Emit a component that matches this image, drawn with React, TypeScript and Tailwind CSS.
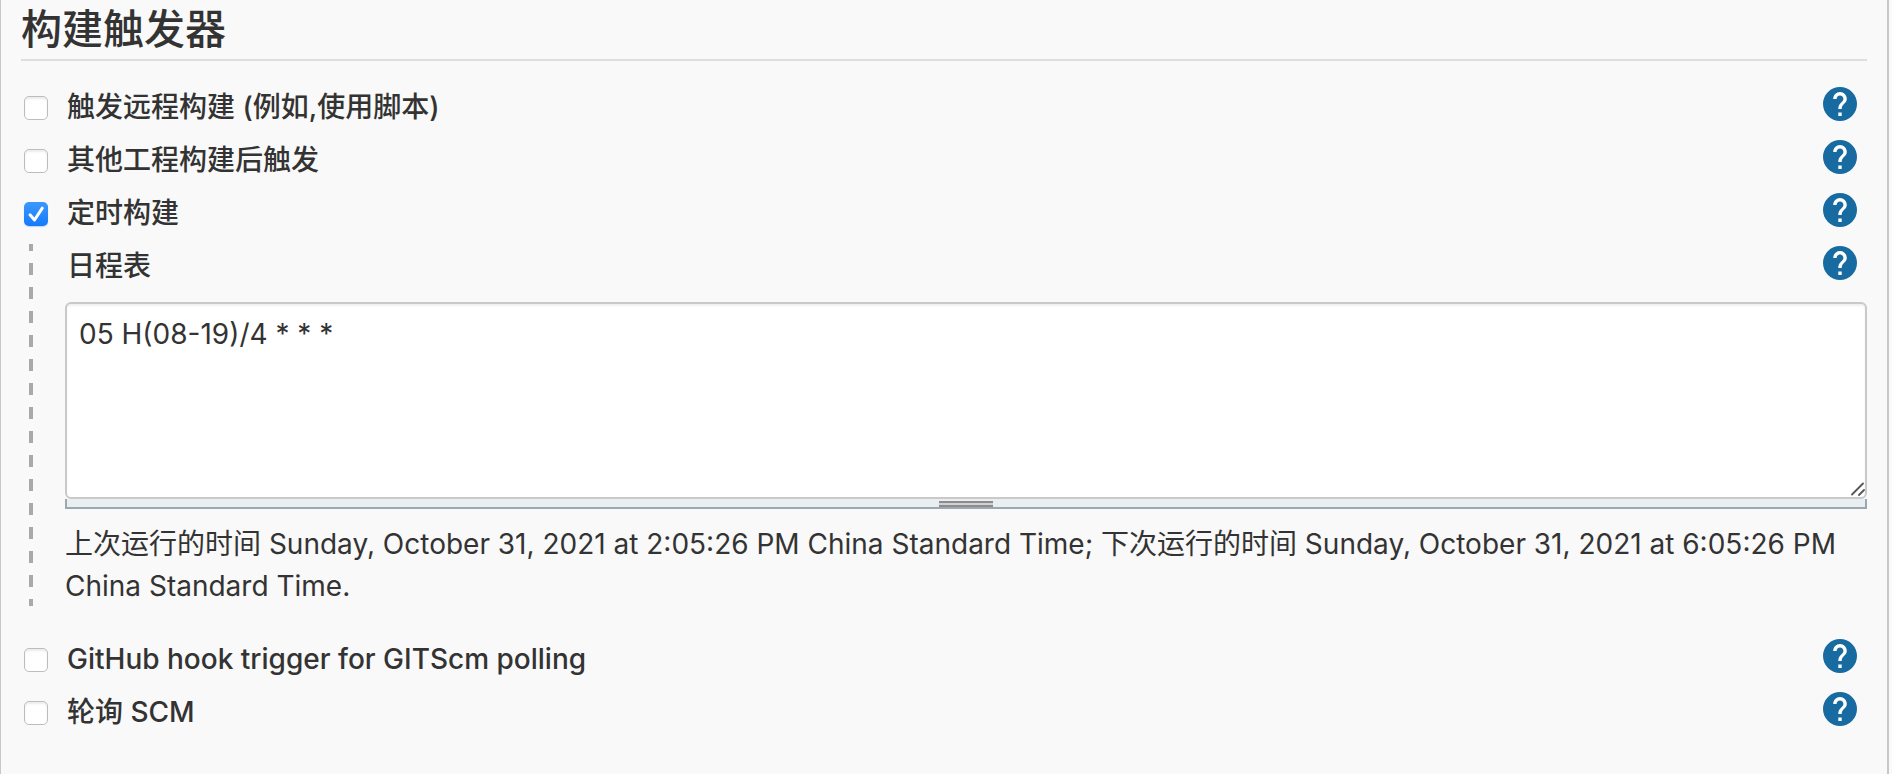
import { useId, useState } from "react";

function HelpButton({ topic }: { topic: string }) {
  return (
    <button type="button" aria-label={topic} className="mr-[10px] mb-[5px] size-[34px] shrink-0 cursor-pointer">
      <svg viewBox="2 2 20 20" className="size-full" aria-hidden="true">
        <circle cx="12" cy="12" r="10" fill="#176ba0" />
        <path
          fill="#fff"
          d="M13 19h-2v-2h2v2zm2.07-7.75l-.9.92C13.45 12.9 13 13.5 13 15h-2v-.5c0-1.1.45-2.1 1.17-2.83l1.24-1.26c.37-.36.59-.86.59-1.41 0-1.1-.9-2-2-2s-2 .9-2 2H8c0-2.21 1.79-4 4-4s4 1.79 4 4c0 .88-.36 1.68-.93 2.25z"
        />
      </svg>
    </button>
  );
}

function TriggerRow({ label, initial = false }: { label: string; initial?: boolean }) {
  const id = useId();
  const [checked, setChecked] = useState(initial);
  return (
    <div className="flex h-[53px] items-center">
      <span className="ml-[3px] mt-[2px] grid size-6 shrink-0">
        <input
          id={id}
          type="checkbox"
          checked={checked}
          onChange={(e) => setChecked(e.target.checked)}
          className="col-start-1 row-start-1 size-6 appearance-none rounded-[5px] border border-[#bdbdbd] bg-white shadow-[inset_0_2px_2px_rgba(0,0,0,0.08)] checked:border-0 checked:bg-linear-to-b checked:from-[#3b98fb] checked:to-[#127afd] checked:shadow-[0_1px_1px_rgba(0,100,255,0.25)]"
        />
        {checked && (
          <svg viewBox="0 0 24 24" className="pointer-events-none col-start-1 row-start-1 size-6" aria-hidden="true">
            <path d="M6 12.8l4.5 5.2L18.3 6.2" fill="none" stroke="#fff" strokeWidth="3" strokeLinecap="round" strokeLinejoin="round" />
          </svg>
        )}
      </span>
      <label htmlFor={id} className="ml-[19px] flex-1 font-medium">
        {label}
      </label>
      <HelpButton topic={label} />
    </div>
  );
}

export default function App() {
  const [schedule, setSchedule] = useState("05 H(08-19)/4 * * *");
  return (
    <div className="min-h-screen bg-[#f9f9f9] pr-[3px]">
      <main className="min-h-screen border-l border-r-2 border-l-[#c8c8c8] border-r-[#c8c8c8] px-5 font-['Inter','Noto_Sans_CJK_SC',sans-serif] text-[28px] leading-[42px] text-[#333]">
        <h1 className="border-b-2 border-[#dedede] pb-px text-[41px] leading-[58px] font-medium">构建触发器</h1>

        <div className="pt-[19px]">
          <TriggerRow label="触发远程构建 (例如,使用脚本)" />
          <TriggerRow label="其他工程构建后触发" />
          <TriggerRow label="定时构建" initial />

          <div className="mb-[25px] flex">
            <div className="mt-[5px] mb-px ml-2 w-1 shrink-0 bg-[repeating-linear-gradient(to_bottom,#a9a9a9_0px,#a9a9a9_7px,transparent_7px,transparent_19px,#a9a9a9_19px,#a9a9a9_24px)]" />
            <div className="ml-8 min-w-0 flex-1">
              <div className="flex h-[53px] items-center">
                <label htmlFor="schedule" className="ml-[2px] flex-1 font-medium">
                  日程表
                </label>
                <HelpButton topic="日程表" />
              </div>
              <div className="relative mt-[10px]">
                <textarea
                  id="schedule"
                  value={schedule}
                  onChange={(e) => setSchedule(e.target.value)}
                  className="block h-[197px] w-full resize-none rounded-md border-2 border-[#c9c9c9] bg-white px-3 py-[9px] shadow-[inset_0_2px_2px_rgba(0,0,0,0.06)] outline-none"
                />
                <svg viewBox="0 0 14 14" className="pointer-events-none absolute right-[2px] bottom-[3px] size-[14px]" fill="none" stroke="#555" strokeWidth="1.8" strokeLinecap="round" aria-hidden="true">
                  <path d="M1 12.5L12 1.5M8 13l5-5" />
                </svg>
              </div>
              <div className="flex h-[10px] cursor-row-resize justify-center border-x-2 border-b-2 border-[#9aa9b1] bg-[#e9eef1]">
                <div className="mt-[2px] h-[6px] w-[54px] border-y-2 border-[#8c8c8c] bg-[#d2d2d2]" />
              </div>
              <p className="mt-[14px]">
                上次运行的时间 Sunday, October 31, 2021 at 2:05:26 PM China Standard Time; 下次运行的时间 Sunday, October 31, 2021 at 6:05:26 PM China Standard Time.
              </p>
            </div>
          </div>

          <TriggerRow label="GitHub hook trigger for GITScm polling" />
          <TriggerRow label="轮询 SCM" />
        </div>
      </main>
    </div>
  );
}
